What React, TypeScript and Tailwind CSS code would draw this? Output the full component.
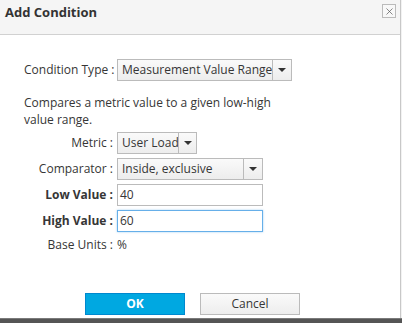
import { X } from "lucide-react";

const Caret = () => (
  <span className="w-0 h-0 border-l-[4px] border-r-[4px] border-t-[4px] border-l-transparent border-r-transparent border-t-[#333]" />
);

const Select = ({ value, width, arrowAt }: { value: string; width: string; arrowAt?: string }) => (
  <div className={`${width} h-[22px] flex border border-[#bbb] bg-gradient-to-b from-[#fafafa] to-[#ededed] text-[#363636]`}>
    <div className="flex-1 flex items-center px-[4px] overflow-hidden whitespace-nowrap">{value}</div>
    <div className={`${arrowAt ?? "w-[19px]"} flex items-center justify-center border-l border-[#bbb]`}>
      <Caret />
    </div>
  </div>
);

const Input = ({ value, focused }: { value: string; focused?: boolean }) => (
  <div
    className={`w-[146px] h-[22px] flex items-center px-[2px] bg-white text-[#363636] border ${
      focused ? "border-[#66afe9] shadow-[0_0_2px_rgba(102,175,233,0.6)]" : "border-[#bbb]"
    }`}
  >
    {value}
  </div>
);

const Label = ({ children, bold }: { children: string; bold?: boolean }) => (
  <div className={`w-[89px] text-right whitespace-nowrap ${bold ? "font-bold" : ""}`}>{children}</div>
);

export default function App() {
  return (
    <div className="w-[402px] h-[323px] flex flex-col bg-[#f2f2f2] font-['Open_Sans',sans-serif] text-[12px] text-[#363636]">
      <div className="w-[401px] flex-1 flex flex-col bg-white border-r border-[#c8c8c8]">
        <div className="h-[35px] flex justify-between bg-[#f5f5f5] border-b border-[#d1d1d1] pl-[5px] pr-[4px] pt-[3px]">
          <h1 className="text-[13px] font-bold text-[#333] leading-[18px]">Add Condition</h1>
          <button className="w-[14px] h-[14px] mt-[1px] flex items-center justify-center border border-[#bbb] bg-[#f8f8f8] text-[#555]">
            <X className="w-[11px] h-[11px]" strokeWidth={1.5} />
          </button>
        </div>

        <div className="flex flex-col pl-[24px] pt-[24px]">
          <div className="flex items-center gap-[4px]">
            <Label>Condition Type :</Label>
            <Select value="Measurement Value Range" width="w-[175px]" />
          </div>

          <p className="mt-[13px] w-[260px] leading-[17px]">
            Compares a metric value to a given low-high value range.
          </p>

          <div className="mt-[4px] flex flex-col gap-[4px]">
            <div className="flex items-center gap-[4px]">
              <Label>Metric :</Label>
              <Select value="User Load" width="w-[80px]" arrowAt="w-[18px]" />
            </div>
            <div className="flex items-center gap-[4px]">
              <Label>Comparator :</Label>
              <Select value="Inside, exclusive" width="w-[146px]" />
            </div>
            <div className="flex items-center gap-[4px]">
              <Label bold>Low Value :</Label>
              <Input value="40" />
            </div>
            <div className="flex items-center gap-[4px]">
              <Label bold>High Value :</Label>
              <Input value="60" focused />
            </div>
            <div className="flex items-center gap-[4px] h-[18px]">
              <Label>Base Units :</Label>
              <span>%</span>
            </div>
          </div>

          <div className="mt-[39px] ml-[61px] flex gap-[15px]">
            <button className="w-[100px] h-[22px] bg-[#00a8e1] border border-[#0088ce] text-white font-bold text-[12px]">
              OK
            </button>
            <button className="w-[100px] h-[22px] bg-gradient-to-b from-[#fafafa] to-[#ededed] border border-[#bbb] text-[#363636] text-[12px]">
              Cancel
            </button>
          </div>
        </div>
      </div>
      <div className="h-[5px] bg-[#555] border-t border-[#7a7a7a]" />
    </div>
  );
}
